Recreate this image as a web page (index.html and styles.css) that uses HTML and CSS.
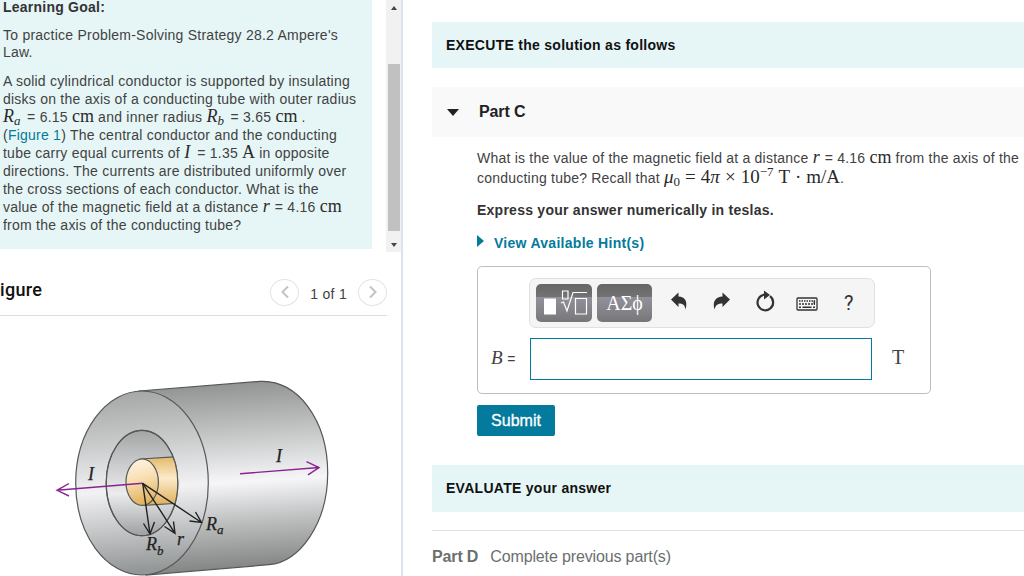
FILE: index.html
```html
<!DOCTYPE html>
<html lang="en">
<head>
    <meta charset="UTF-8">
    <meta name="viewport" content="width=device-width, initial-scale=1.0">
    <title>Problem-Solving Strategy 28.2 Ampere's Law</title>
    <link rel="stylesheet" href="styles.css">
</head>
<body>
    <aside class="side">
        <div class="intro-pane">
            <div class="intro">
                <p class="goal"><b>Learning Goal:</b></p>
                <p>To practice Problem-Solving Strategy 28.2 Ampere's<br>Law.</p>
                <p>A solid cylindrical conductor is supported by insulating<br>
                disks on the axis of a conducting tube with outer radius<br>
                <span class="math w-r"><i>R</i><sub><i>a</i></sub></span> = 6.15 <span class="math w-cm">cm</span> and inner radius <span class="math w-r"><i>R</i><sub><i>b</i></sub></span> = 3.65 <span class="math w-cm">cm</span> .<br>
                (<a href="#">Figure 1</a>) The central conductor and the conducting<br>
                tube carry equal currents of <span class="math w-i"><i>I</i></span> = 1.35 <span class="math w-a">A</span> in opposite<br>
                directions. The currents are distributed uniformly over<br>
                the cross sections of each conductor. What is the<br>
                value of the magnetic field at a distance <span class="math w-s"><i>r</i></span> = 4.16 <span class="math w-cm">cm</span><br>
                from the axis of the conducting tube?</p>
            </div>
            <div class="scrollbar">
                <span class="arrow up"></span>
                <span class="thumb"></span>
                <span class="arrow down"></span>
            </div>
        </div>

        <div class="figure-head">
            <h2>igure</h2>
            <div class="pager">
                <button><svg width="10" height="14" viewBox="0 0 10 14"><path d="M8 1.5 2.5 7 8 12.5"/></svg></button>
                <span>1 of 1</span>
                <button><svg width="10" height="14" viewBox="0 0 10 14"><path d="M2 1.5 7.5 7 2 12.5"/></svg></button>
            </div>
        </div>

        <svg class="figure" width="387" height="260" viewBox="0 316 387 260">
            <defs>
                <linearGradient id="body" x1="0" y1="0" x2="0.06" y2="1">
                    <stop offset="0" stop-color="#8b8d8c"/>
                    <stop offset="0.3" stop-color="#c4c6c6"/>
                    <stop offset="0.55" stop-color="#f6f6f8"/>
                    <stop offset="0.75" stop-color="#bec0c0"/>
                    <stop offset="1" stop-color="#818482"/>
                </linearGradient>
                <linearGradient id="face" x1="0" y1="0" x2="0.06" y2="1">
                    <stop offset="0" stop-color="#a2a4a4"/>
                    <stop offset="0.3" stop-color="#c9cbcb"/>
                    <stop offset="0.56" stop-color="#f2f2f5"/>
                    <stop offset="1" stop-color="#949797"/>
                </linearGradient>
                <linearGradient id="bore" x1="0" y1="0" x2="0" y2="1">
                    <stop offset="0" stop-color="#a3a5a5"/>
                    <stop offset="0.6" stop-color="#ececef"/>
                    <stop offset="1" stop-color="#9da0a0"/>
                </linearGradient>
                <linearGradient id="rod" x1="0" y1="0" x2="0" y2="1">
                    <stop offset="0" stop-color="#e3b765"/>
                    <stop offset="0.45" stop-color="#fcebcb"/>
                    <stop offset="1" stop-color="#deae58"/>
                </linearGradient>
                <linearGradient id="rodFace" x1="0" y1="0" x2="0.2" y2="1">
                    <stop offset="0" stop-color="#fff6e8"/>
                    <stop offset="0.5" stop-color="#f8dfb2"/>
                    <stop offset="1" stop-color="#e3b361"/>
                </linearGradient>
                <clipPath id="boreClip"><ellipse cx="142" cy="483" rx="35.8" ry="52.7"/></clipPath>
            </defs>
            <g stroke="#555857" stroke-width="1.2">
                <path fill="url(#body)" d="M139 391 260 381.4C298 379 327.7 421 327.7 473C327.7 523 300 562 269 564.7L146 575Z"/>
                <ellipse fill="url(#face)" cx="142" cy="483" rx="66.3" ry="92"/>
                <ellipse fill="url(#bore)" cx="142" cy="483" rx="35.8" ry="52.7"/>
                <path clip-path="url(#boreClip)" fill="url(#rod)" d="M140 459 190 456V502.5L144 505.4Z"/>
                <ellipse fill="none" cx="142" cy="483" rx="35.8" ry="52.7"/>
                <ellipse fill="url(#rodFace)" cx="142.2" cy="482.2" rx="16.2" ry="23.2"/>
            </g>
            <g fill="none" stroke="#8a2391" stroke-width="1.4">
                <path d="M142.7 483.3 57 490.3M69 483.5 57 490.3 69 496"/>
                <path d="M240 473.7 319 467.5M306.5 461.7 319 467.5 308 474.8"/>
            </g>
            <g fill="none" stroke="#222" stroke-width="1.4">
                <path d="M142.7 483.3 150 534M143.5 523.5 150 534 154.5 522"/>
                <path d="M142.7 483.3 175 533.3M164.5 526.5 175 533.3 173.5 521.5"/>
                <path d="M142.7 483.3 201.5 522.5M189.5 521 201.5 522.5 195.5 512"/>
            </g>
            <g class="fig-text">
                <text x="88" y="480">I</text>
                <text x="276" y="462">I</text>
                <text x="146" y="550">R<tspan class="sub" dy="5">b</tspan></text>
                <text x="177" y="545">r</text>
                <text x="206" y="530">R<tspan class="sub" dy="4">a</tspan></text>
            </g>
        </svg>
    </aside>

    <main class="content">
        <div class="banner">EXECUTE the solution as follows</div>
        <div class="part-head"><span class="caret"></span>Part C</div>

        <div class="part-body">
            <p class="question">What is the value of the magnetic field at a distance <span class="math w-s"><i>r</i></span> = 4.16 <span class="math w-cm">cm</span> from the axis of the<br>
            conducting tube? Recall that <span class="math eq"><i>μ</i><sub>0</sub> = 4<i>π</i> × 10<sup>−7</sup> T · m/A</span>.</p>
            <p class="express">Express your answer numerically in teslas.</p>
            <a class="hints" href="#"><span class="tri"></span>View Available Hint(s)</a>

            <div class="answer">
                <div class="toolbar">
                    <button class="key">
                        <svg width="56" height="38" viewBox="0 0 56 38">
                            <path fill="#fff" d="M8 14.5h12v16H8z"/>
                            <path fill="none" stroke="#fff" stroke-width="1.2" d="M26.5 7h5.5v8h-5.5zM25 19l2.5-1 3.5 9 6-18.5h14M39.5 14.5h11v15.5h-11z"/>
                        </svg>
                    </button>
                    <button class="key greek">ΑΣϕ</button>
                    <svg class="tools" width="200" height="38" viewBox="0 0 200 38">
                        <g fill="#333">
                            <path d="M14 15.500 21.500 8.500v4c6.500 0 9.500 5 7 13-.6-4.500-2.500-6-7-6v3.500z"/>
                            <path d="M73 15.500 65.500 8.500v4c-6.500 0-10.500 5-8 13 1-4.500 3.500-6 8-6v3.500z"/>
                            <path d="M107 6.500 113 11l-6 4.500z"/>
                        </g>
                        <path fill="none" stroke="#333" stroke-width="2.2" d="M113 12.200a7.800 7.800 0 1 1-5.500-1.500"/>
                        <rect x="140" y="14" width="20" height="12" rx="1" fill="#f5f5f5" stroke="#333" stroke-width="1.3"/>
                        <g fill="none" stroke="#333" stroke-width="1.5">
                            <path stroke-dasharray="1.5 1" d="M142 17h16"/>
                            <path stroke-dasharray="2 1" d="M142 20h16"/>
                            <path d="M142 23.200h2M145.500 23.200h9M156 23.200h2M157.300 16.500v4"/>
                        </g>
                    </svg>
                    <span class="help">?</span>
                </div>
                <div class="entry">
                    <label for="b"><i>B</i> <span>=</span></label>
                    <input type="text" id="b">
                    <span class="unit">T</span>
                </div>
            </div>
            <button class="submit">Submit</button>
        </div>

        <div class="banner evaluate">EVALUATE your answer</div>
        <div class="part-next"><b>Part D</b>Complete previous part(s)</div>
    </main>
</body>
</html>
```
FILE: styles.css
```css
* {
    box-sizing: border-box;
}

body {
    margin: 0;
    height: 576px;
    display: flex;
    overflow: hidden;
    background: #fff;
    color: #424242;
    font: 14px "Liberation Sans", Arial, sans-serif;
}

p, h2 {
    margin: 0;
}

a {
    color: #047a9c;
    text-decoration: none;
}

button {
    border: 0;
    padding: 0;
    font-family: inherit;
}

/* Left column */
.side {
    width: 403px;
    flex: none;
    border-right: 2px solid #dde3ee;
    overflow: hidden;
}

.intro-pane {
    display: flex;
    justify-content: space-between;
    height: 252px;
}

.intro {
    width: 372px;
    height: 249px;
    padding-left: 3px;
    background: #e6f6f6;
    line-height: 17.9px;
    letter-spacing: 0.235px;
    white-space: nowrap;
}

.intro p {
    margin-bottom: 11px;
}

.intro .goal {
    height: 16px;
    line-height: 15px;
    margin-bottom: 10.5px;
    color: #333;
}

.scrollbar {
    width: 15px;
    height: 252px;
    background: #f1f1f1;
    display: flex;
    flex-direction: column;
    align-items: center;
}

.scrollbar .thumb {
    width: 12px;
    height: 167px;
    margin: 52px 0 12px;
    background: #c1c1c1;
}

.arrow {
    border: 3px solid transparent;
}

.arrow.up {
    margin-top: 6px;
    border-top: 0;
    border-bottom: 4px solid #444;
    margin-bottom: 2px;
}

.arrow.down {
    border-bottom: 0;
    border-top: 4px solid #444;
}

.math {
    display: inline-block;
    font-family: "Liberation Serif", "Times New Roman", serif;
    font-size: 18px;
    line-height: 10px;
    white-space: nowrap;
    letter-spacing: 0;
    color: #2a2a2a;
}

.math sub,
.math sup {
    font-size: 13px;
    line-height: 0;
}

.math sub {
    vertical-align: -3px;
}

.math sup {
    vertical-align: 7px;
}

.w-r { width: 20px; }
.w-cm { width: 22px; }
.w-i { width: 9px; }
.w-a { width: 13px; }
.w-s { width: 8px; }

.figure-head {
    display: flex;
    justify-content: space-between;
    align-items: center;
    width: 387px;
    height: 64px;
    padding-top: 17px;
    border-bottom: 1px solid #ddd;
}

.figure-head h2 {
    margin-top: -6px;
    font: 500 18px Roboto, sans-serif;
    letter-spacing: 0.3px;
    color: #111;
}

.pager {
    display: flex;
    align-items: center;
    gap: 11px;
    letter-spacing: 0.3px;
}

.pager span {
    padding-top: 3px;
}

.pager button {
    width: 29px;
    height: 27px;
    border: 1px solid #e3e3e3;
    border-radius: 50%;
    background: #fff;
    display: flex;
    align-items: center;
    justify-content: center;
}

.pager path {
    fill: none;
    stroke: #c3c3c3;
    stroke-width: 2;
}

.figure {
    display: block;
}

.fig-text {
    font: italic 18px "Liberation Serif", serif;
    fill: #222;
    stroke: #222;
    stroke-width: 0.25px;
}

.fig-text .sub {
    font-size: 13px;
}

/* Right column */
.content {
    flex: 1;
    min-width: 0;
    padding: 22px 0 0 29px;
    white-space: nowrap;
}

.banner {
    height: 46px;
    padding-left: 14px;
    background: #e6f6f6;
    color: #111;
    font-weight: bold;
    line-height: 46px;
    letter-spacing: 0.28px;
}

.part-head {
    display: flex;
    align-items: center;
    height: 50px;
    margin-top: 19px;
    padding-left: 15px;
    background: #f9f9f9;
    color: #222;
    font-size: 16px;
    font-weight: bold;
    letter-spacing: -0.1px;
}

.caret {
    margin-right: 20px;
    border: 6px solid transparent;
    border-top: 7px solid #222;
    border-bottom: 0;
}

.part-body {
    padding: 12px 0 0 45px;
}

.question {
    line-height: 19.5px;
    letter-spacing: 0.22px;
}

.question .eq {
    font-size: 19px;
    word-spacing: 0.3px;
}

.express {
    margin-top: 12px;
    color: #333;
    font-weight: bold;
    line-height: 20px;
    letter-spacing: 0.25px;
}

.hints {
    display: flex;
    align-items: center;
    height: 20px;
    margin-top: 13px;
    font-weight: bold;
    letter-spacing: 0.28px;
}

.tri {
    margin: -5px 10px 0 0;
    border: 6px solid transparent;
    border-left: 7px solid #047a9c;
    border-right: 0;
}

.answer {
    width: 454px;
    height: 128px;
    margin-top: 13px;
    padding: 11px 0 0 51px;
    border: 1px solid #bdbdbd;
    border-radius: 5px;
}

.toolbar {
    display: flex;
    align-items: center;
    width: 346px;
    height: 50px;
    padding-left: 6px;
    border: 1px solid #e0e0e0;
    border-radius: 7px;
    background: #f5f5f5;
}

.key {
    width: 56px;
    height: 38px;
    flex: none;
    margin-right: 5px;
    border-radius: 5px;
    background: linear-gradient(#666 0, #737373 34%, #92919b 35%, #77777a 100%);
    color: #fff;
    overflow: hidden;
}

.greek {
    width: 55px;
    font: 20px "Liberation Serif", serif;
}

.tools {
    flex: none;
}

.help {
    margin-left: -13px;
    font: 20px Roboto, sans-serif;
    color: #333;
}

.entry {
    display: flex;
    align-items: center;
    margin: 10px 0 0 -51px;
}

.entry label {
    width: 52px;
    padding: 0 0 3px 13px;
    font: 19px "Liberation Serif", serif;
}

.entry label span {
    font: 14px "Liberation Sans", sans-serif;
}

.entry input {
    width: 342px;
    height: 42px;
    border: 1px solid #047a9c;
    background: #fff;
}

.unit {
    margin-left: 20px;
    padding-bottom: 3px;
    font: 20px "Liberation Serif", serif;
}

.submit {
    width: 78px;
    height: 31px;
    margin-top: 11px;
    border-radius: 2px;
    background: #047a9c;
    color: #fff;
    font-size: 16px;
    -webkit-text-stroke: 0.3px #fff;
}

.evaluate {
    height: 47px;
    margin-top: 29px;
}

.part-next {
    margin-top: 18px;
    padding-top: 17px;
    border-top: 1px solid #e1e1e1;
    color: #6a7070;
    font-size: 16px;
    letter-spacing: -0.14px;
}

.part-next b {
    margin-right: 12px;
}
```
